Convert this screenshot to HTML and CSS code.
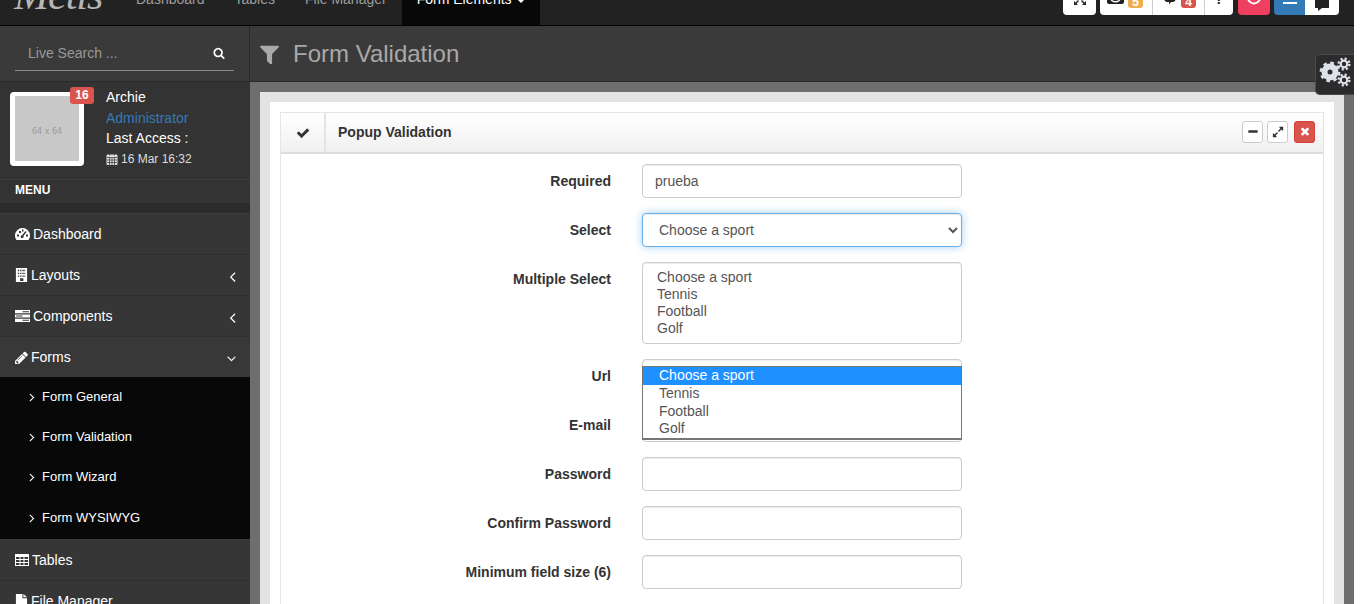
FILE: index.html
```html
<!DOCTYPE html>
<html lang="en">
<head>
<meta charset="utf-8">
<title>Form Validation</title>
<link rel="stylesheet" href="styles.css">
</head>
<body>
<div class="page">
  <header class="topbar">
    <div class="brand">Metis</div>
    <nav class="topnav">
      <a class="toplink">Dashboard</a>
      <a class="toplink">Tables</a>
      <a class="toplink">File Manager</a>
      <a class="toplink active">Form Elements<span class="caret"></span></a>
    </nav>
    <div class="tools">
      <div class="tb tb-expand"><svg class="tbi" viewBox="0 0 14 14"><path d="M1 13v-4l1.500 1.500 2.500-2.500 1 1-2.500 2.500 1.500 1.500zM13 13h-4l1.500-1.500-2.500-2.500 1-1 2.500 2.500 1.500-1.500z"/></svg></div>
      <div class="tgroup">
        <div class="tb tb-mail"><svg class="tbi mail" viewBox="0 0 17 14"><path d="M2 0h13a2 2 0 0 1 2 2v10a2 2 0 0 1-2 2H2a2 2 0 0 1-2-2V2a2 2 0 0 1 2-2z"/><path class="cut" d="M3 8a5.500 4.500 0 0 0 11 0h-1.500a4 3 0 0 1-8 0z"/></svg><span class="tbadge warn">5</span></div>
        <div class="tb tb-chat"><svg class="tbi chat" viewBox="0 0 14 14"><path d="M1 1h9c2 0 3 1.500 3 4s-1 5-3 5H8l-2 2.500V10H4C2 10 1 8 1 5z"/></svg><span class="tbadge danger">4</span></div>
        <div class="tb tb-help"><span class="qm">?</span></div>
      </div>
      <div class="tb tb-power"><svg class="tbi" viewBox="0 0 14 14"><path class="ring" d="M3 1a6 6 0 1 0 8 0"/></svg></div>
      <div class="tgroup last">
        <div class="tb tb-bars"><svg class="tbi" viewBox="0 0 14 14"><path d="M0 6h14v2H0zM0 10h14v2H0z"/></svg></div>
        <div class="tb tb-comment"><svg class="tbi" viewBox="0 0 14 12"><path d="M0 0h14v8H7l-4 3V8H0z"/></svg></div>
      </div>
    </div>
  </header>

  <div class="layout">
    <aside class="sidebar">
      <div class="search">
        <div class="search-inner">
          <span class="search-text">Live Search ...</span>
          <svg class="search-icon" viewBox="0 0 1792 1792"><path d="M1216 832q0-185-131.500-316.500t-316.500-131.500-316.500 131.500-131.500 316.500 131.500 316.500 316.500 131.500 316.500-131.500 131.500-316.500zm512 832q0 52-38 90t-90 38q-54 0-90-38l-343-342q-179 124-399 124-143 0-273.500-55.500t-225-150-150-225-55.500-273.500 55.500-273.500 150-225 225-150 273.500-55.500 273.500 55.500 225 150 150 225 55.500 273.500q0 220-124 399l343 343q37 37 37 90z"/></svg>
        </div>
      </div>
      <div class="user">
        <div class="avatar"><div class="avatar-img">64 x 64</div><span class="avatar-badge">16</span></div>
        <div class="user-info">
          <div class="user-line">Archie</div>
          <div class="user-line role">Administrator</div>
          <div class="user-line">Last Access :</div>
          <div class="user-line date"><svg class="cal" viewBox="0 0 12 12"><path d="M1.500 1.500h9a1 1 0 0 1 1 1v8.500a1 1 0 0 1-1 1h-9a1 1 0 0 1-1-1V2.500a1 1 0 0 1 1-1z"/><path class="cal-grid" d="M1 4.500h10M1 7h10M1 9.500h10M3.500 4v8M6 4v8M8.500 4v8M3.500 0v2.500M8.500 0v2.500"/></svg>16 Mar 16:32</div>
        </div>
      </div>
      <div class="menu-head">MENU</div>
      <div class="menu-band"></div>
      <ul class="menu">
        <li class="item"><svg class="ico w15" viewBox="0 0 15 13"><path fill-rule="evenodd" d="M7.500 0.500A7.500 7.500 0 0 0 0 8c0 1.800.6 3.400 1.500 4.500h12C14.400 11.400 15 9.800 15 8A7.500 7.500 0 0 0 7.500 0.500zM2 7h2v2H2zM4 3.500h2v2H4zM7 2h1.500v2H7zM11 7h2v2h-2zM10.500 3.500l1 1-3 4a1.500 1.500 0 1 1-1.500-.8z"/></svg>Dashboard</li>
        <li class="item"><svg class="ico w13" viewBox="0 0 12 15"><path fill-rule="evenodd" d="M0 0h12v15H0zM2 2v1.500h1.500V2zM4.500 2v1.500H6V2zM7 2v1.500h1.500V2zM9 2v1.500h1V2zM2 5v1.500h1.500V5zM4.500 5v1.500H6V5zM7 5v1.500h1.500V5zM9 5v1.500h1V5zM2 8v1.500h1.500V8zM4.500 8v1.500H6V8zM7 8v1.500h1.500V8zM9 8v1.500h1V8zM4.500 11v3H8v-3z"/></svg>Layouts<svg class="chev" viewBox="0 0 1792 1792"><path d="M1203 544q0 13-10 23l-393 393 393 393q10 10 10 23t-10 23l-50 50q-10 10-23 10t-23-10l-466-466q-10-10-10-23t10-23l466-466q10-10 23-10t23 10l50 50q10 10 10 23z"/></svg></li>
        <li class="item"><svg class="ico w15" viewBox="0 0 14 11"><path fill-rule="evenodd" d="M0 0h14v3H0zM7 1v1h6V1zM0 4h14v3H0zM1 5v1h6V5zM0 8h14v3H0zM7 9v1h6V9z"/></svg>Components<svg class="chev" viewBox="0 0 1792 1792"><path d="M1203 544q0 13-10 23l-393 393 393 393q10 10 10 23t-10 23l-50 50q-10 10-23 10t-23-10l-466-466q-10-10-10-23t10-23l466-466q10-10 23-10t23 10l50 50q10 10 10 23z"/></svg></li>
        <li class="item open"><svg class="ico w13" viewBox="0 0 1536 1536"><path d="M363 1536l91-91-235-235-91 91v107h128v128h107zm523-928q0-22-22-22-10 0-17 7l-542 542q-7 7-7 17 0 22 22 22 10 0 17-7l542-542q7-7 7-17zm-54-192l416 416-832 832H0v-416zm683 96q0 53-37 90l-166 166-416-416 166-165q36-38 90-38 53 0 91 38l235 234q37 39 37 91z"/></svg>Forms<svg class="chev down" viewBox="0 0 1792 1792"><path d="M1395 736q0 13-10 23l-466 466q-10 10-23 10t-23-10l-466-466q-10-10-10-23t10-23l50-50q10-10 23-10t23 10l393 393 393-393q10-10 23-10t23 10l50 50q10 10 10 23z"/></svg></li>
        <li class="sub">
          <a class="sub-item"><svg class="sub-chev" viewBox="0 0 1792 1792"><path d="M1171 960q0 13-10 23l-466 466q-10 10-23 10t-23-10l-50-50q-10-10-10-23t10-23l393-393-393-393q-10-10-10-23t10-23l50-50q10-10 23-10t23 10l466 466q10 10 10 23z"/></svg>Form General</a>
          <a class="sub-item"><svg class="sub-chev" viewBox="0 0 1792 1792"><path d="M1171 960q0 13-10 23l-466 466q-10 10-23 10t-23-10l-50-50q-10-10-10-23t10-23l393-393-393-393q-10-10-10-23t10-23l50-50q10-10 23-10t23 10l466 466q10 10 10 23z"/></svg>Form Validation</a>
          <a class="sub-item"><svg class="sub-chev" viewBox="0 0 1792 1792"><path d="M1171 960q0 13-10 23l-466 466q-10 10-23 10t-23-10l-50-50q-10-10-10-23t10-23l393-393-393-393q-10-10-10-23t10-23l50-50q10-10 23-10t23 10l466 466q10 10 10 23z"/></svg>Form Wizard</a>
          <a class="sub-item"><svg class="sub-chev" viewBox="0 0 1792 1792"><path d="M1171 960q0 13-10 23l-466 466q-10 10-23 10t-23-10l-50-50q-10-10-10-23t10-23l393-393-393-393q-10-10-10-23t10-23l50-50q10-10 23-10t23 10l466 466q10 10 10 23z"/></svg>Form WYSIWYG</a>
        </li>
        <li class="item"><svg class="ico w14" viewBox="0 0 14 12"><path fill-rule="evenodd" d="M0 0h14v12H0zM1 3v2h3.500V3zM5.500 3v2h3V3zM9.500 3v2H13V3zM1 6v2h3.500V6zM5.500 6v2h3V6zM9.500 6v2H13V6zM1 9v2h3.500V9zM5.500 9v2h3V9zM9.500 9v2H13V9z"/></svg>Tables</li>
        <li class="item"><svg class="ico w13" viewBox="0 0 12 15"><path d="M0 0h7v4.500h5V15H0zM8 0l4 3.500H8z"/></svg>File Manager</li>
      </ul>
    </aside>

    <main class="main">
      <div class="head">
        <svg class="head-icon" viewBox="0 0 1408 1408"><path d="M1403 103q17 41-14 70l-493 493v742q0 42-39 59-13 5-25 5-27 0-45-19l-256-256q-19-19-19-45v-486l-493-493q-31-29-14-70 17-39 59-39h1280q42 0 59 39z"/></svg>
        <h1 class="head-title">Form Validation</h1>
      </div>
      <div class="gear-tab">
        <svg class="gears" viewBox="0 0 32 32">
          <circle class="gear-body" cx="11" cy="15" r="5.500"/><circle class="gear-teeth big" cx="11" cy="15" r="9.200"/>
          <circle class="gear-small" cx="25" cy="7" r="3.300"/><circle class="gear-teeth small" cx="25" cy="7" r="5.400"/>
          <circle class="gear-small" cx="25" cy="23" r="3.300"/><circle class="gear-teeth small" cx="25" cy="23" r="5.400"/>
        </svg>
      </div>
      <div class="content">
        <div class="outer">
          <div class="inner">
            <section class="panel">
              <div class="panel-head">
                <div class="panel-check"><svg class="check" viewBox="0 0 1792 1792"><path d="M1671 566q0 40-28 68l-724 724-136 136q-28 28-68 28t-68-28l-136-136-362-362q-28-28-28-68t28-68l136-136q28-28 68-28t68 28l294 295 656-657q28-28 68-28t68 28l136 136q28 28 28 68z"/></svg></div>
                <h2 class="panel-title">Popup Validation</h2>
                <div class="panel-btns">
                  <button class="pbtn" type="button"><svg class="pi" viewBox="0 0 1792 1792"><path d="M1600 736v192q0 40-28 68t-68 28H288q-40 0-68-28t-28-68V736q0-40 28-68t68-28h1216q40 0 68 28t28 68z"/></svg></button>
                  <button class="pbtn" type="button"><svg class="pi" viewBox="0 0 1792 1792"><path d="M883 1056q0 13-10 23l-332 332 144 144q19 19 19 45t-19 45-45 19H192q-26 0-45-19t-19-45v-448q0-26 19-45t45-19 45 19l144 144 332-332q10-10 23-10t23 10l114 114q10 10 10 23zm781-864v448q0 26-19 45t-45 19-45-19l-144-144-332 332q-10 10-23 10t-23-10l-114-114q-10-10-10-23t10-23l332-332-144-144q-19-19-19-45t19-45 45-19h448q26 0 45 19t19 45z"/></svg></button>
                  <button class="pbtn red" type="button"><svg class="pi" viewBox="0 0 1408 1792"><path d="M1298 1202q0 40-28 68l-136 136q-28 28-68 28t-68-28l-294-294-294 294q-28 28-68 28t-68-28l-136-136q-28-28-28-68t28-68l294-294-294-294q-28-28-28-68t28-68l136-136q28-28 68-28t68 28l294 294 294-294q28-28 68-28t68 28l136 136q28 28 28 68t-28 68l-294 294 294 294q28 28 28 68z"/></svg></button>
                </div>
              </div>
              <form class="form">
                <label class="lbl">Required</label>
                <input class="ctl" type="text" value="prueba">
                <label class="lbl">Select</label>
                <select class="ctl focus"><option>Choose a sport</option><option>Tennis</option><option>Football</option><option>Golf</option></select>
                <label class="lbl">Multiple Select</label>
                <select class="ctl multi" multiple><option>Choose a sport</option><option>Tennis</option><option>Football</option><option>Golf</option></select>
                <label class="lbl">Url</label>
                <div class="url-field">
                  <input class="ctl" type="text">
                  <ul class="popup">
                    <li class="pop-opt sel">Choose a sport</li>
                    <li class="pop-opt">Tennis</li>
                    <li class="pop-opt">Football</li>
                    <li class="pop-opt">Golf</li>
                  </ul>
                </div>
                <label class="lbl">E-mail</label>
                <input class="ctl" type="text">
                <label class="lbl">Password</label>
                <input class="ctl" type="password">
                <label class="lbl">Confirm Password</label>
                <input class="ctl" type="password">
                <label class="lbl">Minimum field size (6)</label>
                <input class="ctl" type="text">
              </form>
            </section>
          </div>
        </div>
      </div>
    </main>
  </div>
</div>
</body>
</html>
```
FILE: styles.css
```css
* { box-sizing: border-box; }
html, body { margin: 0; padding: 0; height: 100%; background: #fff; overflow: hidden; }
body { font-family: "Liberation Sans", Arial, sans-serif; font-size: 14px; line-height: 20px; color: #333; }
.page { width: 1354px; height: 604px; overflow: hidden; background: #6e6e6e; }

/* top bar */
.topbar { height: 26px; background: #222; border-bottom: 1px solid #000; display: flex; overflow: hidden; }
.brand { width: 121px; height: 25px; padding-left: 14px; display: flex; align-items: flex-end; padding-bottom: 9px; font-family: "Liberation Serif", serif; font-style: italic; font-size: 42px; line-height: 42px; letter-spacing: -1px; color: #b5b5b5; }
.topnav { display: flex; height: 25px; }
.toplink { display: flex; align-items: flex-end; padding: 0 15px 16px; color: #9d9d9d; white-space: nowrap; }
.toplink.active { background: #080808; color: #fff; padding-right: 15px; }
.caret { width: 0; height: 0; margin: 0 0 6px 5px; border-top: 4px solid #fff; border-left: 4px solid transparent; border-right: 4px solid transparent; }
.tools { margin-left: auto; padding-right: 15px; display: flex; align-items: flex-start; gap: 4px; }
.tb { height: 15px; background: #fff; overflow: hidden; display: flex; align-items: flex-end; justify-content: center; color: #222; }
.tb-expand { width: 33px; border-radius: 0 0 4px 4px; }
.tbi { width: 14px; height: 14px; flex: none; fill: currentColor; margin-bottom: 9px; }
.tgroup { display: flex; border-radius: 0 0 4px 4px; overflow: hidden; }
.tb-mail, .tb-chat { border-right: 1px solid #ccc; gap: 4px; justify-content: flex-start; }
.tb-mail { width: 53px; padding-left: 7px; }
.tb-chat { width: 52px; padding-left: 10px; }
.tb-help { width: 28px; }
.mail { width: 17px; margin-bottom: 11px; }
.mail .cut { fill: #fff; }
.chat { margin-bottom: 9px; }
.tbadge { width: 15px; height: 16px; margin-bottom: 7px; flex: none; border-radius: 0 0 3px 3px; color: #fff; font-weight: 700; font-size: 12px; line-height: 12px; text-align: center; display: flex; align-items: flex-end; justify-content: center; }
.warn { background: #f0ad4e; }
.danger { background: #d9534f; }
.qm { font-weight: 700; line-height: 14px; margin-bottom: 9px; }
.tb-power { width: 32px; margin-left: 1px; background: #ef4060; border-radius: 0 0 4px 4px; color: #fff; }
.ring { fill: none; stroke: #fff; stroke-width: 2; }
.tb-bars { width: 31px; background: #337ab7; color: #fff; }
.tb-comment { width: 34px; }
.tb-comment .tbi { height: 12px; margin-bottom: 3px; }

.layout { display: flex; height: 578px; }

/* sidebar */
.sidebar { width: 250px; flex: none; background: #333; color: #fff; }
.search { height: 56px; padding: 9px 15px 0 15px; background: #3a3a3a; border-bottom: 1px solid #2a2a2a; border-right: 1px solid #2a2a2a; }
.search-inner { height: 36px; display: flex; align-items: center; padding: 1px 9px 0 13px; border-bottom: 1px solid #8a8a8a; color: #999; }
.search-text { flex: 1; }
.search-icon { width: 12px; height: 12px; fill: #fff; }
.user { height: 98px; display: flex; gap: 22px; padding: 5px 0 0 10px; background: #333; border-bottom: 1px solid #3e3e3e; }
.avatar { position: relative; width: 74px; height: 74px; margin-top: 5px; flex: none; background: #fff; border-radius: 4px; padding: 4px 5px 5px 5px; }
.avatar-img { height: 65px; background: #c8c8c8; color: #9a9a9a; font-family: "DejaVu Sans", sans-serif; font-size: 8px; line-height: 72px; text-align: center; }
.avatar-badge { position: absolute; right: -10px; top: -5px; width: 24px; height: 17px; border-radius: 3px; background: #d9534f; color: #fff; font-weight: 700; font-size: 12px; line-height: 16px; text-align: center; }
.user-info { width: 140px; }
.user-line { height: 20.500px; line-height: 20.500px; color: #fff; white-space: nowrap; }
.role { color: #337ab7; }
.date { font-size: 12px; display: flex; align-items: center; gap: 3px; color: #ddd; }
.cal { width: 12px; height: 12px; fill: #ddd; }
.cal-grid { stroke: #333; stroke-width: .7; fill: none; }
.menu-head { height: 23px; background: #333; color: #fff; font-size: 12px; font-weight: 700; line-height: 20px; padding-left: 15px; }
.menu-band { height: 11px; background: #2b2b2b; border-bottom: 1px solid #3f3f3f; }
.menu { list-style: none; margin: 0; padding: 0; }
.item { height: 41px; display: flex; align-items: center; gap: 3px; padding: 0 15px 1px; background: #363636; border-bottom: 1px solid #2e2e2e; color: #fff; white-space: nowrap; }
.item.open { background: #383838; height: 40px; border-bottom: 0; }
.ico { flex: none; fill: #fff; height: 14px; }
.w15 { width: 15px; }
.w14 { width: 14px; }
.w13 { width: 13px; }
.chev { width: 17px; height: 17px; margin-left: auto; margin-top: 3px; margin-right: -6px; fill: #fff; }
.chev.down { width: 15px; height: 15px; margin-right: -4px; }
.sub { height: 163px; background: #080808; border-bottom: 1px solid #3c3c3c; }
.sub-item { height: 40.400px; display: flex; align-items: center; padding: 0 0 1px 25px; font-size: 13px; color: #fff; white-space: nowrap; }
.sub-chev { width: 14px; height: 14px; margin-right: 3px; fill: #fff; }

/* main */
.main { position: relative; flex: 1; min-width: 0; }
.head { height: 56px; display: flex; align-items: center; padding: 1px 0 0 10px; gap: 14px; background: #3a3a3a; border-bottom: 1px solid #2a2a2a; }
.head-icon { width: 19px; height: 19px; fill: #a9a9a9; }
.head-title { margin: 0; font-size: 24px; line-height: 30px; font-weight: 400; color: #a9a9a9; }
.gear-tab { position: absolute; right: 0; top: 28px; width: 39px; height: 41px; padding-bottom: 3px; background: #2b2b2b; border: 1px solid #4a4a4a; border-right: 0; border-radius: 5px 0 0 5px; display: flex; align-items: center; justify-content: center; }
.gears { width: 32px; height: 32px; }
.gear-body { fill: none; stroke: #dde2ea; stroke-width: 6; }
.gear-small { fill: none; stroke: #dde2ea; stroke-width: 2.200; }
.gear-teeth { fill: none; stroke: #dde2ea; stroke-width: 2.400; }
.gear-teeth.big { stroke-dasharray: 3.600 3.630; }
.gear-teeth.small { stroke-dasharray: 2.100 2.140; }
.content { padding: 10px; }
.outer { background: #e3e3e3; padding: 10px 10px 0; }
.inner { background: #fff; padding: 10px 10px 0; height: 600px; }
.panel { border: 1px solid #e5e5e5; border-bottom: 0; height: 600px; }
.panel-head { height: 41px; display: flex; align-items: stretch; background: linear-gradient(#fff, #f0f0f0); border-bottom: 2px solid #ddd; }
.panel-check { width: 45px; display: flex; align-items: center; justify-content: center; border-right: 2px solid #e4e4e4; }
.check { width: 14px; height: 14px; fill: #333; }
.panel-title { margin: 0 0 0 12px; font-size: 14px; font-weight: 700; line-height: 39px; color: #333; }
.panel-btns { margin-left: auto; margin-right: 8px; display: flex; gap: 4px; align-items: center; padding-bottom: 1px; }
.pbtn { width: 21px; height: 22px; padding: 0; display: flex; align-items: center; justify-content: center; background: #fff; border: 1px solid #ccc; border-radius: 3px; }
.pi { width: 12px; height: 12px; fill: #333; }
.pbtn.red { background: #d9534f; border-color: #d43f3a; margin-left: 2px; }
.pbtn.red .pi { fill: #fff; }

/* form */
.form { display: grid; grid-template-columns: 330px 320px; column-gap: 31px; row-gap: 15px; padding-top: 10px; }
.lbl { text-align: right; font-weight: 700; line-height: 20px; padding-top: 7px; font-size: 14px; color: #333; }
.ctl { display: block; width: 320px; height: 34px; padding: 6px 12px; margin: 0; background: #fff; border: 1px solid #ccc; border-radius: 4px; box-shadow: inset 0 1px 1px rgba(0,0,0,.075); font-family: "Liberation Sans", Arial, sans-serif; font-size: 14px; line-height: 20px; color: #555; outline: 0; }
.focus { border-color: #66afe9; box-shadow: inset 0 1px 1px rgba(0,0,0,.075), 0 0 8px rgba(102,175,233,.6); }
.multi { height: 82px; }
.url-field { position: relative; height: 34px; }
.popup { position: absolute; left: 0; top: 7px; width: 320px; height: 74px; margin: 0; padding: 0; list-style: none; background: #fff; border: 1px solid #767676; border-bottom-width: 2px; color: #555; }
.pop-opt { height: 18px; line-height: 16px; padding-left: 16px; }
.pop-opt:last-child { height: 17px; line-height: 15px; }
.pop-opt.sel { background: #1e90ff; color: #fff; }
```
